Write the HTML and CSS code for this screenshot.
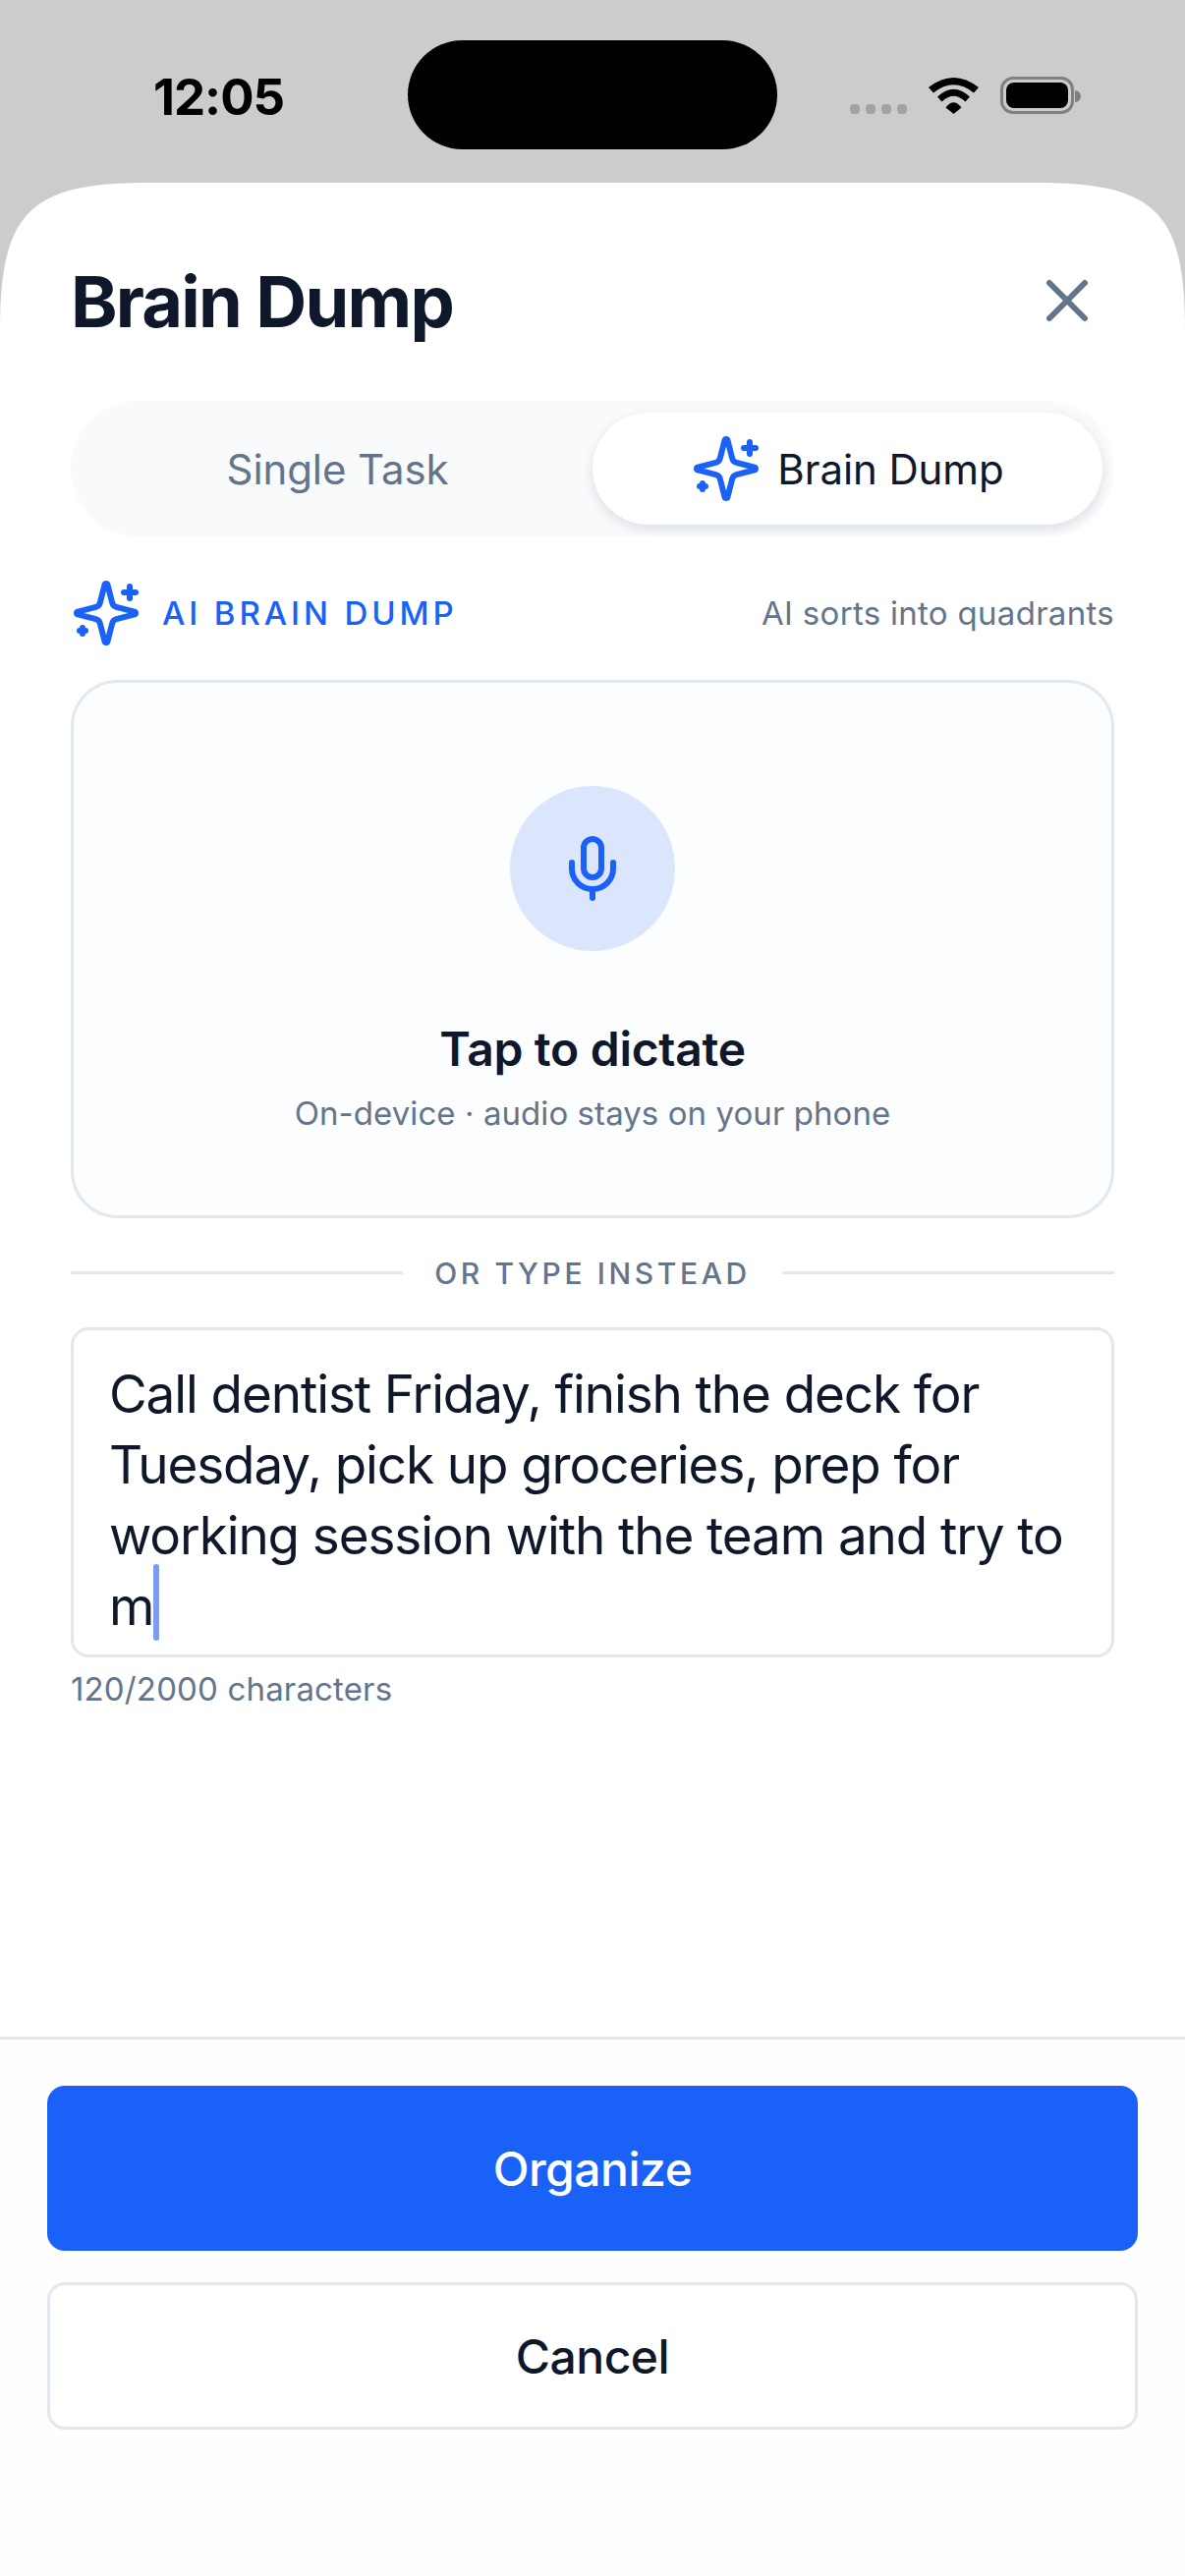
FILE: index.html
```html
<!DOCTYPE html>
<html lang="en">
<head>
    <meta charset="UTF-8">
    <meta name="viewport" content="width=device-width, initial-scale=1.0">
    <title>Brain Dump</title>
    <link rel="stylesheet" href="styles.css">
</head>
<body>
    <div class="status-bar">
        <span class="time">12:05</span>
        <div class="island"></div>
        <div class="status-icons">
            <div class="signal"><i></i><i></i><i></i><i></i></div>
            <svg class="wifi" viewBox="0 0 51 37" width="51" height="37">
                <path d="M0 10 Q25.500 -10 51 10 L46 15.500 Q25.500 -1 5 15.500 Z"/>
                <path d="M9 19.500 Q25.500 4 42 19.500 L37.500 24.500 Q25.500 13 13.500 24.500 Z"/>
                <path d="M17.500 30.500 Q25.500 20 33.500 30.500 L25.500 37 Z"/>
            </svg>
            <div class="battery"><div class="battery-fill"></div></div>
            <div class="battery-cap"></div>
        </div>
    </div>

    <div class="sheet">
        <header class="sheet-header">
            <h1>Brain Dump</h1>
            <svg class="icon close" viewBox="0 0 24 24">
                <path d="M18 6 6 18"/>
                <path d="m6 6 12 12"/>
            </svg>
        </header>

        <div class="tabs">
            <div class="tab">Single Task</div>
            <div class="tab active">
                <svg class="icon sparkle" viewBox="0 0 24 24">
                    <path d="M9.937 15.500A2 2 0 0 0 8.500 14.063l-6.135-1.582a.5.5 0 0 1 0-.962L8.500 9.936A2 2 0 0 0 9.937 8.500l1.582-6.135a.5.5 0 0 1 .963 0L14.063 8.500A2 2 0 0 0 15.500 9.937l6.135 1.581a.5.5 0 0 1 0 .964L15.500 14.063a2 2 0 0 0-1.437 1.437l-1.582 6.135a.5.5 0 0 1-.963 0z"/>
                    <path d="M20 3v4"/>
                    <path d="M22 5h-4"/>
                    <path d="M4 17v2"/>
                    <path d="M5 18H3"/>
                </svg>
                <span>Brain Dump</span>
            </div>
        </div>

        <div class="ai-row">
            <div class="ai-label">
                <svg class="icon" viewBox="0 0 24 24">
                    <path d="M9.937 15.500A2 2 0 0 0 8.500 14.063l-6.135-1.582a.5.5 0 0 1 0-.962L8.500 9.936A2 2 0 0 0 9.937 8.500l1.582-6.135a.5.5 0 0 1 .963 0L14.063 8.500A2 2 0 0 0 15.500 9.937l6.135 1.581a.5.5 0 0 1 0 .964L15.500 14.063a2 2 0 0 0-1.437 1.437l-1.582 6.135a.5.5 0 0 1-.963 0z"/>
                    <path d="M20 3v4"/>
                    <path d="M22 5h-4"/>
                    <path d="M4 17v2"/>
                    <path d="M5 18H3"/>
                </svg>
                <span>AI BRAIN DUMP</span>
            </div>
            <span class="ai-note">AI sorts into quadrants</span>
        </div>

        <div class="dictate-card">
            <div class="mic-circle">
                <svg class="icon" viewBox="0 0 24 24">
                    <path d="M12 2a3 3 0 0 0-3 3v7a3 3 0 0 0 6 0V5a3 3 0 0 0-3-3Z"/>
                    <path d="M19 10v2a7 7 0 0 1-14 0v-2"/>
                    <path d="M12 19v3"/>
                </svg>
            </div>
            <div class="dictate-title">Tap to dictate</div>
            <div class="dictate-sub">On-device · audio stays on your phone</div>
        </div>

        <div class="divider"><span>OR TYPE INSTEAD</span></div>

        <div class="text-box">Call dentist Friday, finish the deck for Tuesday, pick up groceries, prep for working session with the team and try to m<span class="caret"></span></div>
        <div class="char-count">120/2000 characters</div>

        <footer class="sheet-footer">
            <button class="btn btn-primary">Organize</button>
            <button class="btn btn-secondary">Cancel</button>
        </footer>
    </div>
</body>
</html>
```

FILE: styles.css
```css
:root {
    --blue: #1a61f7;
    --ink: #0f172a;
    --muted: #64748b;
    --line: #e2e8f0;
}

* {
    box-sizing: border-box;
    margin: 0;
    padding: 0;
}

body {
    width: 1206px;
    height: 2622px;
    overflow: hidden;
    display: flex;
    flex-direction: column;
    background-color: #cccccc;
    color: var(--ink);
    font-family: Inter, 'Noto Sans', sans-serif;
}

.icon {
    width: 72px;
    height: 72px;
    flex: none;
    fill: none;
    stroke: currentColor;
    stroke-width: 2;
    stroke-linecap: round;
    stroke-linejoin: round;
}

.status-bar {
    height: 186px;
    flex: none;
    display: grid;
    grid-template-columns: 1fr 376px 1fr;
    padding-top: 41px;
}

.time {
    padding: 2px 0 0 156px;
    font-size: 51px;
    font-weight: 700;
    line-height: 111px;
    letter-spacing: -1px;
    color: #000;
}

.island {
    height: 111px;
    border-radius: 56px;
    background-color: #000;
}

.status-icons {
    height: 111px;
    display: flex;
    align-items: flex-start;
    padding: 38px 0 0 74px;
}

.signal {
    display: flex;
    gap: 6px;
    margin: 27px 22px 0 0;
}

.signal i {
    width: 10px;
    height: 10px;
    border-radius: 4px;
    background-color: #a3a3a3;
}

.wifi {
    margin-right: 22px;
}

.battery {
    width: 75px;
    height: 38px;
    margin-top: -1px;
    padding: 3px;
    border: 3px solid #808080;
    border-radius: 13px;
}

.battery-fill {
    height: 100%;
    border-radius: 8px;
    background-color: #000;
}

.battery-cap {
    width: 6px;
    height: 12px;
    margin: 13px 0 0 1px;
    border-radius: 0 6px 6px 0;
    background-color: #808080;
}

.sheet {
    flex: 1;
    display: flex;
    flex-direction: column;
    padding: 0 72px;
    background-color: #fff;
    /* continuous corners, a plain border-radius is too round here */
    clip-path: path("M0 150 C0 30 30 0 150 0 L1056 0 C1176 0 1206 30 1206 150 L1206 2436 L0 2436 Z");
}

.sheet-header {
    height: 222px;
    flex: none;
    display: flex;
    align-items: center;
    justify-content: space-between;
    padding: 18px 12px 0 0;
    color: var(--muted);
}

h1 {
    font-size: 72px;
    font-weight: 700;
    letter-spacing: -1.8px;
    color: var(--ink);
}

.tabs {
    height: 138px;
    flex: none;
    display: grid;
    grid-template-columns: 1fr 1fr;
    padding: 12px;
    border-radius: 69px;
    background-color: #f8fafc;
}

.tab {
    display: flex;
    align-items: center;
    justify-content: center;
    gap: 16px;
    border-radius: 57px;
    font-size: 42px;
    font-weight: 400;
    letter-spacing: -0.1px;
    color: var(--muted);
}

.tab.active {
    background-color: #fff;
    color: var(--ink);
    box-shadow: 0 4px 12px rgba(15, 23, 42, 0.12);
}

.sparkle {
    color: var(--blue);
}

.ai-row {
    height: 146px;
    flex: none;
    display: flex;
    align-items: center;
    justify-content: space-between;
    padding-top: 9px;
}

.ai-label {
    display: flex;
    align-items: center;
    gap: 21px;
    font-size: 33px;
    font-weight: 500;
    letter-spacing: 0.118em;
    color: var(--blue);
}

.ai-note {
    font-size: 33px;
    letter-spacing: 0.3px;
    color: var(--muted);
}

.dictate-card {
    height: 548px;
    flex: none;
    display: flex;
    flex-direction: column;
    align-items: center;
    padding-top: 105px;
    border: 3px solid var(--line);
    border-radius: 48px;
    background-color: #fcfdfe;
}

.mic-circle {
    width: 168px;
    height: 168px;
    display: flex;
    align-items: center;
    justify-content: center;
    border-radius: 50%;
    background-color: #dbe6fc;
    color: var(--blue);
}

.dictate-title {
    margin-top: 72px;
    font-size: 48px;
    font-weight: 600;
    line-height: 56px;
    letter-spacing: -0.3px;
}

.dictate-sub {
    margin-top: 15px;
    font-size: 33px;
    line-height: 44px;
    letter-spacing: 0.07px;
    color: var(--muted);
}

.divider {
    height: 111px;
    flex: none;
    display: flex;
    align-items: center;
    gap: 32px;
    font-size: 30px;
    font-weight: 500;
    letter-spacing: 0.12em;
    color: var(--muted);
}

.divider::before,
.divider::after {
    content: "";
    flex: 1;
    height: 3px;
    background-color: var(--line);
}

.text-box {
    height: 336px;
    flex: none;
    padding: 29px 36px 0;
    border: 3px solid var(--line);
    border-radius: 18px;
    font-size: 53px;
    line-height: 72px;
    letter-spacing: -1.1px;
}

/* negative margins so the caret does not make the last line taller */
.caret {
    display: inline-block;
    width: 6px;
    height: 78px;
    margin-top: -8px;
    margin-bottom: -16px;
    border-radius: 3px;
    background-color: #7b9bf8;
}

.char-count {
    margin-top: 12px;
    font-size: 33px;
    line-height: 40px;
    letter-spacing: 0.15px;
    color: var(--muted);
}

.sheet-footer {
    height: 549px;
    flex: none;
    display: flex;
    flex-direction: column;
    margin: auto -72px 0;
    padding: 47px 48px 0;
    border-top: 3px solid var(--line);
    background-color: #fefefe;
}

.btn {
    font-family: inherit;
    font-size: 48px;
    font-weight: 500;
    letter-spacing: -0.5px;
    border-radius: 18px;
}

.btn-primary {
    height: 168px;
    border: none;
    background-color: var(--blue);
    color: #fff;
}

.btn-secondary {
    height: 150px;
    margin-top: 32px;
    border: 3px solid var(--line);
    background-color: #fff;
    color: var(--ink);
}
```
